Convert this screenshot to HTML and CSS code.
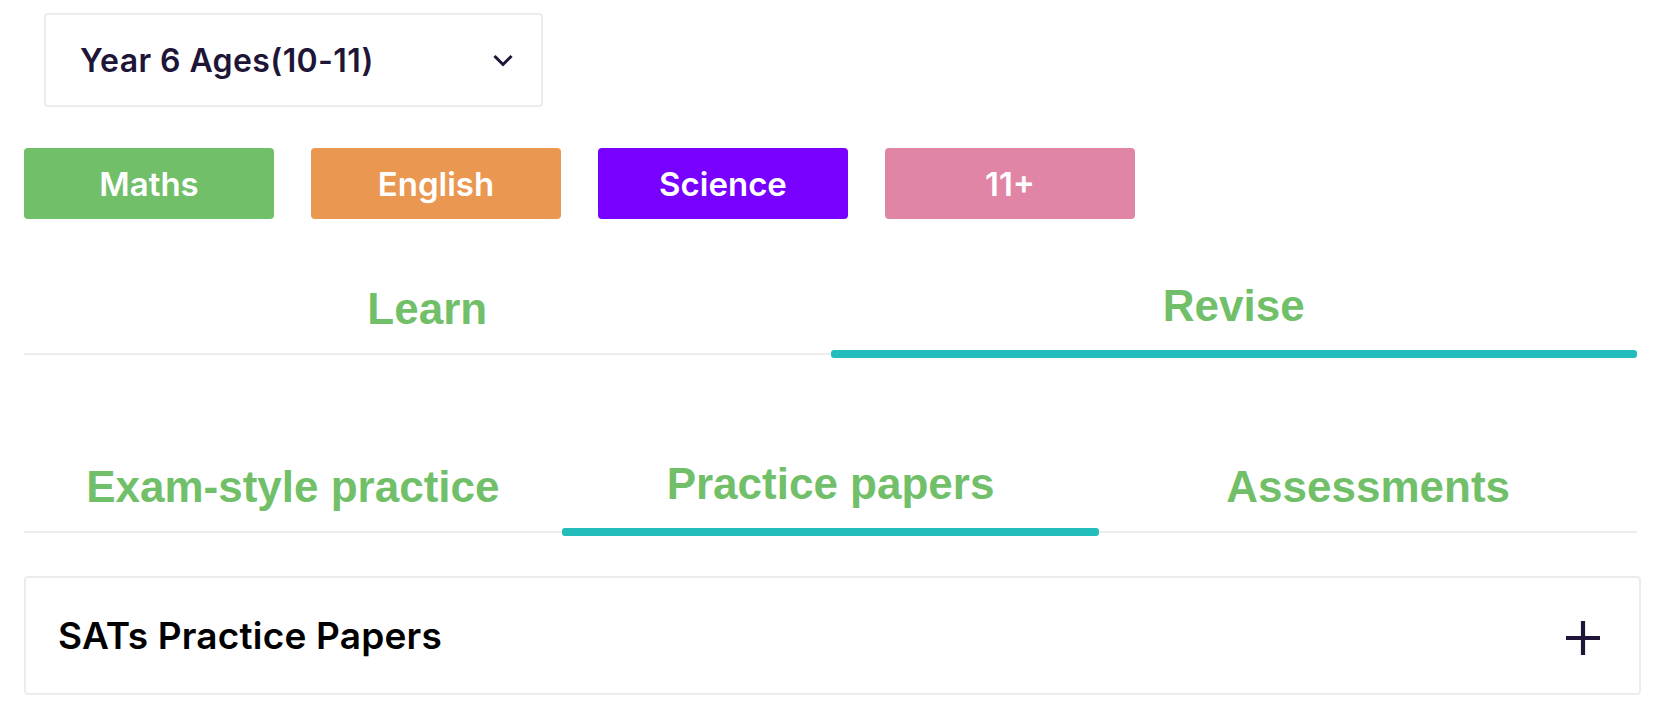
FILE: index.html
```html
<!DOCTYPE html>
<html>
<head>
<meta charset="utf-8">
<link rel="stylesheet" href="styles.css">
</head>
<body>
<div class="page">
  <div class="select">
    <span class="select-label">Year 6 Ages(10-11)</span>
    <svg class="chev" width="20" height="14" viewBox="0 0 20 14"><polyline points="2.5,3 10,10.5 17.5,3" fill="none" stroke="#1e1537" stroke-width="3" stroke-linecap="square" stroke-linejoin="miter"/></svg>
  </div>

  <div class="subjects">
    <div class="subject maths">Maths</div>
    <div class="subject english">English</div>
    <div class="subject science">Science</div>
    <div class="subject eleven">11+</div>
  </div>

  <div class="tabs tabs-main">
    <div class="tab">Learn</div>
    <div class="tab active">Revise</div>
  </div>

  <div class="tabs tabs-sub">
    <div class="tab">Exam-style practice</div>
    <div class="tab active">Practice papers</div>
    <div class="tab">Assessments</div>
  </div>

  <div class="accordion">
    <span class="acc-title">SATs Practice Papers</span>
    <svg class="plus" width="36" height="36" viewBox="0 0 36 36"><line x1="18" y1="1" x2="18" y2="35" stroke="#1e1537" stroke-width="4.2"/><line x1="1" y1="18" x2="35" y2="18" stroke="#1e1537" stroke-width="4.2"/></svg>
  </div>
</div>
</body>
</html>
```

FILE: styles.css
```css
* { box-sizing: border-box; }
html, body { margin: 0; padding: 0; background: #fff; }
body { font-family: Inter, "Noto Sans", sans-serif; }

.page {
  padding: 13px 26px 0 24px;
  display: flex;
  flex-direction: column;
}

.select {
  margin-left: 20px;
  width: 499px;
  height: 94px;
  border: 2px solid #ececec;
  border-radius: 4px;
  display: flex;
  align-items: center;
  justify-content: space-between;
  padding: 0 28px 0 34px;
}
.select-label {
  font-size: 32px;
  font-weight: 600;
  letter-spacing: 0.4px;
  color: #1e1537;
}
.chev { display: block; margin-top: 2px; }

.subjects {
  margin-top: 41px;
  display: flex;
  gap: 37px;
}
.subject {
  width: 250px;
  height: 71px;
  border-radius: 4px;
  color: #fff;
  font-size: 33px;
  font-weight: 600;
  display: flex;
  align-items: center;
  justify-content: center;
}
.maths { background: #72bf6a; }
.english { background: #ea9752; }
.science { background: #7700ff; }
.eleven { background: #e185a6; }

.tabs {
  display: flex;
  border-bottom: 2px solid #ececec;
  margin-right: 4px;
}
.tabs-main { margin-top: 45px; }
.tabs-sub { margin-top: 87px; }

.tab {
  flex: 1;
  text-align: center;
  font-family: "Liberation Sans", Arial, sans-serif;
  font-weight: bold;
  font-size: 44px;
  color: #72bf6a;
  padding: 20px 0 19px;
  position: relative;
}
.tab.active {
  padding: 17px 0 22px;
}
.tab.active::after {
  content: "";
  position: absolute;
  left: 0;
  right: 0;
  bottom: -5px;
  height: 8px;
  background: #23bdbb;
  border-radius: 3px;
}

.accordion {
  margin-top: 43px;
  height: 119px;
  border: 2px solid #ececec;
  border-radius: 4px;
  display: flex;
  align-items: center;
  justify-content: space-between;
  padding: 0 38px 0 32px;
}
.acc-title {
  font-size: 37px;
  font-weight: 600;
  letter-spacing: 0.2px;
  color: #000;
}
.plus { display: block; margin-top: 4px; }
```
